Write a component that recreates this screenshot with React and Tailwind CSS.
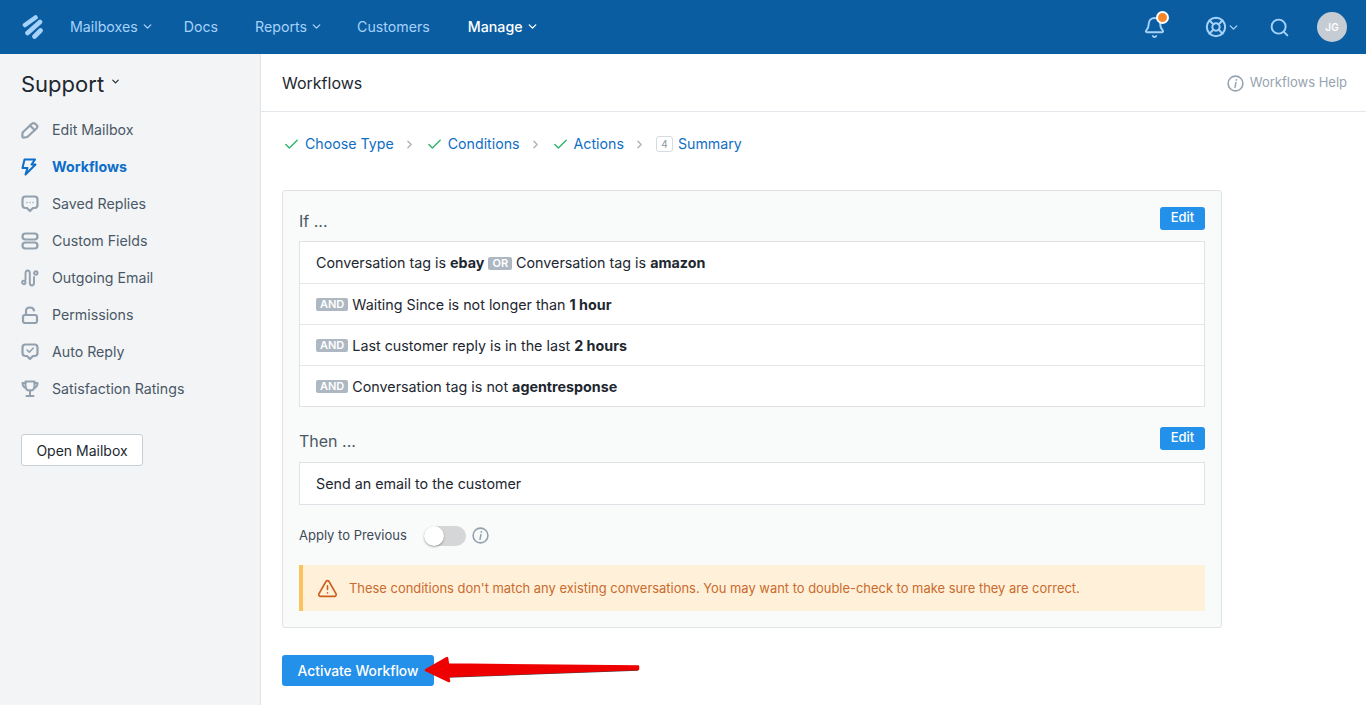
import React from "react";
import { ChevronDown, ChevronRight, Check, Search, Bell, LifeBuoy, TriangleAlert } from "lucide-react";

const Logo = () => (
  <svg width="21" height="24" viewBox="0 0 21 24" fill="none" stroke="#a5d2f9" strokeWidth="4.6" strokeLinecap="round">
    <path d="M3 10 L13.5 2.5" />
    <path d="M5.5 18 L18 7" />
    <path d="M12.5 21.5 L18.5 15.5" />
  </svg>
);

const InfoIcon = ({ className }) => (
  <svg className={className} width="17" height="17" viewBox="0 0 17 17" fill="none" stroke="currentColor">
    <circle cx="8.5" cy="8.5" r="7.4" strokeWidth="1.6" />
    <path d="M8.9 7.6 L8 12.4" strokeWidth="1.5" strokeLinecap="round" />
    <path d="M9.4 4.9 h0.01" strokeWidth="1.8" strokeLinecap="round" />
  </svg>
);

const stroke = { fill: "none", stroke: "#93a1af", strokeWidth: 2.2, strokeLinecap: "round", strokeLinejoin: "round" };

const icons = {
  edit: (
    <svg width="18" height="18" viewBox="0 0 18 18" {...stroke}>
      <path d="M1.6 11.5 L10.8 2.8 Q12.4 1.4 14 2.6 L15.8 4.2 Q17 5.8 15.6 7.3 L6.4 16 L2.6 16.6 Q1.3 16.6 1.3 15.3Z" />
      <path d="M9 4.5 L13.8 9.2" />
    </svg>
  ),
  flow: (
    <svg width="16" height="18" viewBox="0 0 16 18" fill="none" stroke="#0d6ec9" strokeWidth="2" strokeLinejoin="round" strokeLinecap="round">
      <path d="M3.5 1.5 H14 L10.5 6.5 H14.5 L4.5 16.5 L6.5 10 H1.5Z" />
    </svg>
  ),
  replies: (
    <svg width="18" height="18" viewBox="0 0 18 18" {...stroke}>
      <path d="M4.5 1.5 H13.5 Q16.5 1.5 16.5 4.5 V10 Q16.5 13 13.5 13 H12 L9 16 L6 13 H4.5 Q1.5 13 1.5 10 V4.5 Q1.5 1.5 4.5 1.5Z" />
      <path d="M6 7.5 h0.01 M9 7.5 h0.01 M12 7.5 h0.01" strokeWidth="1.3" />
    </svg>
  ),
  fields: (
    <svg width="18" height="18" viewBox="0 0 18 18" {...stroke}>
      <rect x="1.5" y="1.5" width="15" height="6" rx="3" />
      <rect x="1.5" y="10.5" width="15" height="6" rx="3" />
    </svg>
  ),
  outgoing: (
    <svg width="18" height="18" viewBox="0 0 18 18" {...stroke} strokeWidth="1.9">
      <circle cx="2.8" cy="13.5" r="1.7" />
      <circle cx="14.8" cy="4" r="1.7" />
      <path d="M4.5 11 V4.5 Q4.5 1.5 6.7 1.5 Q8.8 1.5 8.8 4.5 V13.5 Q8.8 16.5 11 16.5 Q13 16.5 13 13.5 V8" />
    </svg>
  ),
  lock: (
    <svg width="18" height="18" viewBox="0 0 18 18" {...stroke}>
      <rect x="2" y="9" width="14" height="8" rx="2" />
      <path d="M5 9 V5 Q5 1.5 9 1.5 Q12.5 1.5 13 4.5" />
    </svg>
  ),
  auto: (
    <svg width="18" height="18" viewBox="0 0 18 18" {...stroke}>
      <path d="M4.5 1.5 H13.5 Q16.5 1.5 16.5 4.5 V10 Q16.5 13 13.5 13 H12 L9 16 L6 13 H4.5 Q1.5 13 1.5 10 V4.5 Q1.5 1.5 4.5 1.5Z" />
      <path d="M6 7 L8.3 9.2 L12.3 5" strokeWidth="1.6" />
    </svg>
  ),
  trophy: (
    <svg width="18" height="18" viewBox="0 0 18 18" {...stroke} strokeWidth="2">
      <path d="M4.5 1.5 H13.5 V6 Q13.5 10.5 9 10.5 Q4.5 10.5 4.5 6Z" />
      <path d="M4.5 3 H1.5 Q1.5 7 5 8 M13.5 3 H16.5 Q16.5 7 13 8 M9 10.5 V15.5 M5.5 16 H12.5" />
    </svg>
  ),
};

const navItems = [
  ["edit", "Edit Mailbox"],
  ["flow", "Workflows", true],
  ["replies", "Saved Replies"],
  ["fields", "Custom Fields"],
  ["outgoing", "Outgoing Email"],
  ["lock", "Permissions"],
  ["auto", "Auto Reply"],
  ["trophy", "Satisfaction Ratings"],
];

const TopLink = ({ children, caret, active, className = "" }) => (
  <a className={`flex items-center gap-[3px] text-[14.2px] ${className} ${active ? "text-white font-medium" : "text-[#a5d2f9]"}`}>
    {children}
    {caret && <ChevronDown size={13} strokeWidth={2.5} />}
  </a>
);

const Step = ({ children, done, num }) => (
  <span className="flex items-center">
    {done && <Check size={17} strokeWidth={2} className="text-[#2fb56f] mr-[5px]" />}
    {num && (
      <span className="w-[17px] h-[16px] mr-[5px] flex items-center justify-center border border-[#d5dbe1] rounded-[3px] text-[10px] text-[#8a97a4]">
        {num}
      </span>
    )}
    <span className="text-[14.2px] text-[#0f6ec4]">{children}</span>
  </span>
);

const Sep = () => <ChevronRight size={13} strokeWidth={2.5} className="text-[#a9b3bd] mx-[9.5px]" />;

const Tag = ({ children }) => (
  <span className="inline-flex items-center justify-center h-[13px] px-[4px] rounded-[2px] bg-[#aeb8c2] text-white text-[11px] font-semibold leading-none mx-1 first:ml-0">
    {children}
  </span>
);

const Edit = () => (
  <button className="h-[23px] w-[45px] rounded-[3px] bg-[#2390ea] text-white text-[13px] font-medium">Edit</button>
);

const Row = ({ children, className = "" }) => (
  <div className={`h-[41px] flex items-center pl-4 border-t border-[#e3e7eb] first:border-t-0 text-[14.3px] text-[#1d2730] ${className}`}>
    {children}
  </div>
);

export default function App() {
  return (
    <div className="h-[705px] overflow-hidden flex flex-col bg-white font-['Inter',sans-serif]">
      <header className="h-[54px] shrink-0 bg-[#0b5da2] flex items-center">
        <div className="ml-[22px] w-[48px] flex"><Logo /></div>
        <nav className="flex items-center pb-[1px]">
          <TopLink caret>Mailboxes</TopLink>
          <TopLink className="ml-[30px]">Docs</TopLink>
          <TopLink caret className="ml-[37px]">Reports</TopLink>
          <TopLink className="ml-[34px]">Customers</TopLink>
          <TopLink caret active className="ml-[38px]">Manage</TopLink>
        </nav>
        <div className="ml-auto flex items-center mr-[19px] text-[#a5d2f9]">
          <span className="relative mr-[39px]">
            <Bell size={23} strokeWidth={2} />
            <span className="absolute top-[-5px] right-[-3px] w-[13px] h-[13px] rounded-full bg-[#f5862a] border-2 border-white" />
          </span>
          <span className="flex items-center mr-[29px]">
            <LifeBuoy size={22} strokeWidth={2.2} />
            <ChevronDown size={13} strokeWidth={2.5} />
          </span>
          <Search size={21} strokeWidth={2.2} className="mr-[27px]" />
          <span className="w-[30px] h-[30px] rounded-full bg-[#c6ccd3] text-white text-[10px] font-semibold flex items-center justify-center">JG</span>
        </div>
      </header>

      <div className="flex flex-1 min-h-0">
        <aside className="w-[261px] shrink-0 bg-[#f2f4f6] border-r border-[#dfe3e8] pl-[21px]">
          <div className="h-[57px] flex items-center text-[22px] text-[#1d2730] pt-[4px]">
            Support
            <ChevronDown size={11} strokeWidth={2.5} className="ml-[6px] mb-[6px]" />
          </div>
          <ul>
            {navItems.map(([icon, label, active]) => (
              <li key={label} className="h-[37px] flex items-center">
                <span className="w-[31px] flex">{icons[icon]}</span>
                <span className={`text-[14.2px] ${active ? "font-bold text-[#0d6ec9]" : "text-[#4a5866]"}`}>{label}</span>
              </li>
            ))}
          </ul>
          <button className="mt-[27px] w-[122px] h-[32px] bg-white border border-[#c6ced6] rounded-[3px] text-[14px] text-[#1d2730]">
            Open Mailbox
          </button>
        </aside>

        <main className="flex-1 min-w-0">
          <div className="h-[58px] flex items-center justify-between border-b border-[#e3e7eb] pl-[21px] pr-[19px]">
            <h1 className="text-[16px] text-[#1d2730]">Workflows</h1>
            <span className="flex items-center gap-[6px] text-[13px] text-[#96a3b0] pt-[1px]">
              <InfoIcon />
              Workflows Help
            </span>
          </div>
          <div className="pl-[21px] pt-[22px]">
            <div className="flex items-center h-[20px] pl-[1px]">
              <Step done>Choose Type</Step>
              <Sep />
              <Step done>Conditions</Step>
              <Sep />
              <Step done>Actions</Step>
              <Sep />
              <Step num="4">Summary</Step>
            </div>

            <section className="relative mt-[36px] w-[940px] h-[438px] bg-[#f9fafa] border border-[#dfe3e8] rounded-[3px] px-4">
              <div className="flex items-center justify-between h-[50px] pt-[4px]">
                <h2 className="text-[16px] text-[#4a5866] pt-[6px]">If ...</h2>
                <Edit />
              </div>
              <div className="bg-white border border-[#dfe3e8]">
                <Row className="pt-[1px]">
                  Conversation tag is&nbsp;<b className="font-bold">ebay</b>
                  <Tag>OR</Tag>
                  Conversation tag is&nbsp;<b className="font-bold">amazon</b>
                </Row>
                <Row className="pt-[1px]">
                  <Tag>AND</Tag>Waiting Since is not longer than&nbsp;<b className="font-bold">1 hour</b>
                </Row>
                <Row className="pt-[1px]">
                  <Tag>AND</Tag>Last customer reply is in the last&nbsp;<b className="font-bold">2 hours</b>
                </Row>
                <Row className="pt-[1px]">
                  <Tag>AND</Tag>Conversation tag is not&nbsp;<b className="font-bold">agentresponse</b>
                </Row>
              </div>

              <div className="flex items-center justify-between mt-[19px] h-[24px] mb-[12px]">
                <h2 className="text-[16px] text-[#4a5866] pt-[6px]">Then ...</h2>
                <Edit />
              </div>
              <div className="bg-white border border-[#dfe3e8]">
                <Row>Send an email to the customer</Row>
              </div>

              <div className="flex items-center h-[24px] mt-[19px] text-[13px] text-[#3d4956]">
                Apply to Previous
                <span className="ml-[17px] w-[42px] h-[20px] rounded-full bg-[#d4d6d8] relative">
                  <span className="absolute left-0 top-0 w-[20px] h-[20px] rounded-full bg-white shadow-[0_1px_2px_rgba(0,0,0,0.35)]" />
                </span>
                <InfoIcon className="ml-[6px] mb-[2px] text-[#93a1af]" />
              </div>

              <div className="mt-[17px] h-[46px] flex items-center bg-[#fff1d9] border-l-4 border-[#fcc35c] pl-[14px] pt-[1px] text-[12.93px] text-[#cb6a2d]">
                <TriangleAlert size={21} strokeWidth={1.8} className="text-[#cc5f1e] mr-[11px]" />
                These conditions don't match any existing conversations. You may want to double-check to make sure they are correct.
              </div>
            </section>

            <div className="relative mt-[27px]">
              <button className="w-[152px] h-[31px] rounded-[3px] bg-[#2390ea] text-white text-[13.8px] font-medium pt-[1px]">
                Activate Workflow
              </button>
              <svg className="absolute left-[142px] top-[-3px]" width="218" height="34" viewBox="0 0 218 34">
                <path d="M24 25 L214 18" stroke="#444" strokeWidth="1.4" fill="none" />
                <path d="M2 18 L23 6 L24 12.5 L214 14.5 L214 17 L24 24 L25 29Z" fill="#ee0000" stroke="#ee0000" strokeWidth="2.5" strokeLinejoin="round" />
              </svg>
            </div>
          </div>
        </main>
      </div>
    </div>
  );
}
